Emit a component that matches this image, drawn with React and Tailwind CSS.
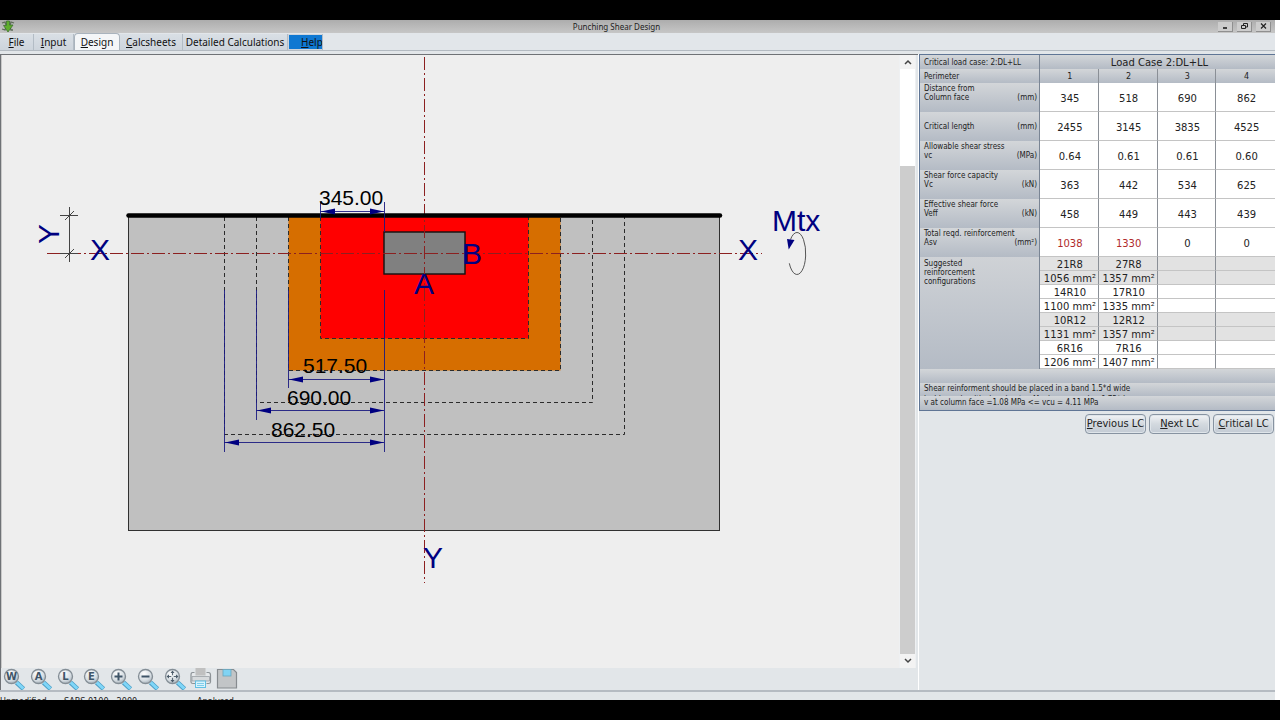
import React from "react";

const TABS = [
  { label: "File", width: "w-[34px]" },
  { label: "Input", width: "w-[40px]" },
  { label: "Design", width: "w-[46px]", active: true },
  { label: "Calcsheets", width: "w-[63px]" },
  { label: "Detailed Calculations", width: "w-[105px]", plain: true },
];

const RESULTS = [
  { name: "Distance from", symbol: "Column face", unit: "(mm)", values: ["345", "518", "690", "862"] },
  { name: "", symbol: "Critical length", unit: "(mm)", values: ["2455", "3145", "3835", "4525"] },
  { name: "Allowable shear stress", symbol: "vc", unit: "(MPa)", values: ["0.64", "0.61", "0.61", "0.60"] },
  { name: "Shear force capacity", symbol: "Vc", unit: "(kN)", values: ["363", "442", "534", "625"] },
  { name: "Effective shear force", symbol: "Veff", unit: "(kN)", values: ["458", "449", "443", "439"] },
  { name: "Total reqd. reinforcement", symbol: "Asv", unit: "(mm²)", values: ["1038", "1330", "0", "0"], warn: [true, true] },
];

const CONFIGS = [
  ["21R8", "27R8"],
  ["1056 mm²", "1357 mm²"],
  ["14R10", "17R10"],
  ["1100 mm²", "1335 mm²"],
  ["10R12", "12R12"],
  ["1131 mm²", "1357 mm²"],
  ["6R16", "7R16"],
  ["1206 mm²", "1407 mm²"],
];

function Hotkey({ text }) {
  return (
    <span>
      <span className="underline underline-offset-1">{text[0]}</span>
      {text.slice(1)}
    </span>
  );
}

function TitleBar() {
  const button =
    "flex h-[10px] w-[15px] items-center justify-center bg-[#cdcdcd] border-r border-b border-[#8f8f8f]";
  return (
    <header className="flex h-[13px] shrink-0 items-center bg-linear-to-b from-[#adadad] to-[#c6c6c6] pr-1">
      <svg viewBox="0 0 14 13" className="ml-px h-[13px] w-[14px]" aria-hidden="true">
        <path d="M1 3 L4 2 L5 5 M13 3 L10 2 L9 5 M1 9 L4 10 L5 7 M12 10 L10 10 L9 7" fill="none" stroke="#5e6b58" strokeWidth="1.3" />
        <path d="M5.5 1 H8.5 V5 H12 L7 12 L2.5 5.5 H5.5 Z" fill="#5fae2c" stroke="#3d7030" strokeWidth="0.8" />
      </svg>
      <h1 className="flex-1 text-center font-['Noto_Sans',Tahoma,sans-serif] text-[8px] leading-3 text-[#222]">
        Punching Shear Design
      </h1>
      <div className="flex gap-1">
        <button aria-label="Minimize" className={button}>
          <svg viewBox="0 0 9 8" className="h-2 w-[9px]"><path d="M2 6 H6" stroke="#111" strokeWidth="1.5" /></svg>
        </button>
        <button aria-label="Restore" className={button}>
          <svg viewBox="0 0 9 8" className="h-2 w-[9px]">
            <path d="M3.5 3 V1.5 H7.5 V5 H6 M1.5 3.5 H5.5 V6.5 H1.5 Z" fill="none" stroke="#222" />
          </svg>
        </button>
        <button aria-label="Close" className={button}>
          <svg viewBox="0 0 9 8" className="h-2 w-[9px]"><path d="M2 1.5 L7 6.5 M7 1.5 L2 6.5" stroke="#222" strokeWidth="1.2" /></svg>
        </button>
      </div>
    </header>
  );
}

function TabBar() {
  return (
    <nav className="flex h-[18px] shrink-0 items-end border-b border-[#b3bac1] bg-[#e2e6ea] font-['Noto_Sans',Tahoma,sans-serif] text-[10px] leading-4 text-[#111]">
      {TABS.map((tab) => (
        <button
          key={tab.label}
          className={`flex shrink-0 items-center justify-center whitespace-nowrap border-r ${tab.width} ${
            tab.active
              ? "h-[17px] rounded-t-sm border-x border-t border-[#a9b3bd] bg-[#f4f6f8]"
              : "h-4 border-[#b3bcc5] bg-linear-to-b from-[#d9dfe5] to-[#cdd4dc]"
          }`}
        >
          {tab.plain ? tab.label : <Hotkey text={tab.label} />}
        </button>
      ))}
      <button className="h-4 w-[35px] border-r border-[#b3bcc5] bg-[#cdd4dc] pl-px text-left">
        <span className="block h-[14px] w-[33px] overflow-hidden bg-[#0f78d2] pl-3 leading-[14px]">
          <Hotkey text="Help" />
        </span>
      </button>
    </nav>
  );
}

const arrow = (x, y, dir) => `M${x} ${y} l${dir * 14} -3 v6 Z`;

function Drawing() {
  return (
    <svg
      viewBox="2 55 897 613"
      className="h-full w-full"
      role="img"
      aria-label="Punching shear plan"
      fontFamily="'Liberation Sans', Arial, sans-serif"
    >
      <rect x="128.5" y="215.5" width="591" height="315" fill="#c0c0c0" stroke="#303030" />
      <rect x="288.5" y="215.5" width="272" height="155" fill="#d66e00" />
      <rect x="320.5" y="215.5" width="208" height="123" fill="#ff0000" />
      <g fill="none" stroke="#2b2b2b" strokeDasharray="4 3">
        <path d="M288.5 217 V370.5 H560.5 V217" />
        <path d="M320.5 217 V338.5 H528.5 V217" />
        <path d="M256.5 217 V402.5 H592.5 V217" />
        <path d="M224.5 217 V434.5 H624.5 V217" />
      </g>
      <rect x="384" y="232" width="81" height="42" fill="#808080" stroke="#111" strokeWidth="1.4" />
      <g stroke="#8c2020" strokeDasharray="13 3 2 3">
        <path d="M424.5 57 V583" />
        <path d="M47 253.5 H762" />
      </g>
      <path d="M128.5 215.5 H720" stroke="#000" strokeWidth="4.5" strokeLinecap="round" />

      <g stroke="#1a1a80" fill="none" strokeWidth="0.9">
        <path d="M320.5 202 V218 M384.5 202 V232 M320.5 211.5 H384" />
        <path d="M288.5 290 V388 M256.5 290 V420 M224.5 290 V452 M384.5 290 V452" />
        <path d="M288 379.5 H384 M256 410.5 H384 M224 442.5 H384" />
      </g>
      <g fill="#000080">
        <path d={arrow(321, 211.5, 1)} />
        <path d={arrow(384, 211.5, -1)} />
        <path d={arrow(289, 379.5, 1)} />
        <path d={arrow(384, 379.5, -1)} />
        <path d={arrow(257, 410.5, 1)} />
        <path d={arrow(384, 410.5, -1)} />
        <path d={arrow(225, 442.5, 1)} />
        <path d={arrow(384, 442.5, -1)} />
      </g>
      <g fontSize="21" fill="#000">
        <text x="319" y="205">345.00</text>
        <text x="303" y="373">517.50</text>
        <text x="287" y="405">690.00</text>
        <text x="271" y="437">862.50</text>
      </g>

      <path d="M69.5 207 V262 M60 215.5 H78 M60 253.5 H78 M65 220 L74 211 M65 258 L74 249" stroke="#444" fill="none" />

      <g fontSize="30" fill="#000080">
        <text x="90" y="260">X</text>
        <text x="738" y="260">X</text>
        <text x="414" y="294">A</text>
        <text x="462" y="264">B</text>
        <text x="423" y="568">Y</text>
        <text x="772" y="231">Mtx</text>
        <text transform="translate(59 234) rotate(-90)" textAnchor="middle">Y</text>
      </g>
      <path d="M789.3 263.3 A8.7 21 0 1 0 790.5 239.5" fill="none" stroke="#444" strokeWidth="0.9" />
      <path d="M787 239 L794.5 240 L788.7 249.5 Z" fill="#000080" />
    </svg>
  );
}

function Scrollbar() {
  const button = "flex h-[14px] w-full items-center justify-center bg-[#f3f3f3]";
  return (
    <div className="mr-0.5 flex w-[17px] shrink-0 flex-col border-l border-r border-[#eef0f2] bg-white">
      <button aria-label="Scroll up" className={button}>
        <svg viewBox="0 0 8 6" className="h-[6px] w-2"><path d="M1 5 L4 2 L7 5" fill="none" stroke="#444" strokeWidth="1.5" /></svg>
      </button>
      <div className="flex grow-[97]" />
      <div className="flex grow-[488] bg-[#cdcdcd]" />
      <button aria-label="Scroll down" className={button}>
        <svg viewBox="0 0 8 6" className="h-[6px] w-2"><path d="M1 1 L4 4 L7 1" fill="none" stroke="#444" strokeWidth="1.5" /></svg>
      </button>
    </div>
  );
}

function Magnifier({ children, label }) {
  return (
    <button aria-label={label} className="h-[23px] w-[23px]">
      <svg viewBox="0 0 23 23" className="h-full w-full">
        <defs>
          <radialGradient id="lens" cx="0.4" cy="0.3" r="0.8">
            <stop offset="0" stopColor="#ffffff" />
            <stop offset="0.6" stopColor="#d6dde2" />
            <stop offset="1" stopColor="#98a4ae" />
          </radialGradient>
        </defs>
        <path d="M13.5 14.5 L20.5 21" stroke="#4d9fc6" strokeWidth="4.6" />
        <path d="M13.8 14.5 L20.3 20.6" stroke="#7fd6f8" strokeWidth="3" />
        <circle cx="8.5" cy="8.5" r="7" fill="url(#lens)" stroke="#848e96" strokeWidth="1.3" />
        {children}
      </svg>
    </button>
  );
}

function Toolbar() {
  return (
    <div className="h-[22px] shrink-0 overflow-hidden bg-[#e2e6e9] pl-0.5">
      <div role="toolbar" className="flex w-[235px] justify-between">
        {["W", "A", "L", "E"].map((letter) => (
          <Magnifier key={letter} label={`Zoom ${letter}`}>
            <text x="8.5" y="12" textAnchor="middle" fontSize="10" fontWeight="700" fill="#3f5568" fontFamily="'DejaVu Sans', sans-serif">
              {letter}
            </text>
          </Magnifier>
        ))}
        <Magnifier label="Zoom in">
          <path d="M8.5 4.5 V12.5 M4.5 8.5 H12.5" stroke="#3f5568" strokeWidth="2" />
        </Magnifier>
        <Magnifier label="Zoom out">
          <path d="M4.5 8.5 H12.5" stroke="#3f5568" strokeWidth="2" />
        </Magnifier>
        <Magnifier label="Pan">
          <path d="M8.5 5 V7.3 M8.5 9.7 V12 M5 8.5 H7.3 M9.7 8.5 H12" stroke="#5b6a76" strokeWidth="1.2" />
          <path d="M8.5 2.5 L10.5 5 H6.5 Z M8.5 14.5 L10.5 12 H6.5 Z M2.5 8.5 L5 6.5 V10.5 Z M14.5 8.5 L12 6.5 V10.5 Z" fill="#4a5a68" />
        </Magnifier>
        <button aria-label="Print" className="h-[22px] w-[22px]">
          <svg viewBox="0 0 22 22" className="h-full w-full">
            <path d="M4.5 4.500 H2.5 Q1 4.500 1 7 V14 Q1 15.500 3 15.500 H5 M16.500 4.500 H18.500 Q20.500 4.500 20.500 7 V14 Q20.500 15.500 18.500 15.500 H16.500" fill="#e7e9eb" stroke="#8d9397" strokeWidth="1.2" />
            <path d="M2 8.5 H19.5 V13 H2 Z" fill="#d7dadc" stroke="#9aa0a4" strokeWidth="0.8" />
            <rect x="5.5" y="0" width="10" height="7.5" fill="#c0c0c0" />
            <rect x="5.5" y="13" width="10" height="6.5" fill="#d9f3fc" stroke="#62bfe2" />
            <path d="M7 15.5 H14 M7 17.5 H14" stroke="#7fcdea" />
          </svg>
        </button>
        <button aria-label="Save" className="h-[22px] w-[22px]">
          <svg viewBox="0 0 22 22" className="h-full w-full">
            <path d="M1.500 1.500 H17.500 L20.500 4.500 V20 H1.500 Z" fill="#c2c5c7" stroke="#868b8f" strokeWidth="1.2" />
            <rect x="7" y="1.5" width="8" height="6.5" fill="#80d3f3" stroke="#6aa7be" strokeWidth="0.8" />
          </svg>
        </button>
      </div>
    </div>
  );
}

const headFill = "bg-linear-to-b from-[#d3d6d9] to-[#b4bbc5]";

function ResultsTable() {
  const valueCell = "border-r border-[#8a8f96] last:border-r-0";
  return (
    <table className="w-full table-fixed border-separate border-spacing-0 border-l border-t border-[#5f7595] font-['DejaVu_Sans',Verdana,sans-serif] text-[10px] leading-[11px] text-[#222]">
      <colgroup>
        <col className="w-[120px]" />
        <col />
        <col />
        <col />
        <col />
      </colgroup>
      <thead>
        <tr>
          <th scope="col" className={`h-[14px] border-r border-[#7a8594] p-0 pl-1 text-left font-['DejaVu_Sans_Condensed',Tahoma,sans-serif] text-[8px] font-normal ${headFill}`}>
            Critical load case: 2:DL+LL
          </th>
          <th scope="colgroup" colSpan={4} className={`h-[14px] p-0 pl-1 font-normal ${headFill}`}>
            Load Case 2:DL+LL
          </th>
        </tr>
        <tr>
          <th scope="row" className={`h-[14px] border-r border-[#7a8594] p-0 pl-1 text-left font-['DejaVu_Sans_Condensed',Tahoma,sans-serif] text-[8px] font-normal ${headFill}`}>
            Perimeter
          </th>
          {["1", "2", "3", "4"].map((n) => (
            <th key={n} scope="col" className={`h-[14px] p-0 pl-0.5 text-[8px] font-normal ${valueCell} ${headFill}`}>
              {n}
            </th>
          ))}
        </tr>
      </thead>
      <tbody>
        {RESULTS.map((row) => (
          <tr key={row.symbol}>
            <th scope="row" className={`h-[29px] border-r border-[#7a8594] p-0 pl-1 text-left align-top font-['DejaVu_Sans_Condensed',Tahoma,sans-serif] text-[8px] font-normal ${headFill}`}>
              <div className="h-[10px] whitespace-nowrap pt-px leading-[9px]">{row.name}</div>
              <div className="flex justify-between pr-0.5 leading-[9px]">
                <span>{row.symbol}</span>
                <span>{row.unit}</span>
              </div>
            </th>
            {row.values.map((value, i) => (
              <td
                key={i}
                className={`h-[29px] border-b border-b-[#c4c4c4] bg-white p-0 pl-0.5 pt-0.5 text-center ${valueCell} ${
                  row.warn && row.warn[i] ? "text-[#b02a2a]" : ""
                }`}
              >
                {value}
              </td>
            ))}
          </tr>
        ))}
        {CONFIGS.map((row, r) => (
          <tr key={r} className={r % 4 < 2 ? "bg-[#e2e2e2]" : "bg-white"}>
            {r === 0 && (
              <th
                scope="rowgroup"
                rowSpan={8}
                className="border-r border-[#7a8594] bg-linear-to-b from-[#cfd2d6] to-[#b4bbc5] p-0 pl-1 pt-0.5 text-left align-top font-['DejaVu_Sans_Condensed',Tahoma,sans-serif] text-[8px] font-normal leading-[9px]"
              >
                Suggested
                <br />
                reinforcement
                <br />
                configurations
              </th>
            )}
            {[row[0], row[1], "", ""].map((value, i) => (
              <td key={i} className={`h-[14px] whitespace-nowrap border-b border-b-[#c4c4c4] p-0 pl-0.5 pt-0.5 text-center ${valueCell}`}>
                {value}
              </td>
            ))}
          </tr>
        ))}
      </tbody>
    </table>
  );
}

function ResultsPanel() {
  return (
    <aside className="flex w-[357px] shrink-0 flex-col border-l border-white bg-[#e2e6e9]">
      <ResultsTable />
      <div className="border-b border-l border-[#5f7595] text-[8px] text-[#222]">
        <div className={`h-[14px] ${headFill}`} />
        <div className={`h-[13px] overflow-hidden pl-1 leading-[11px] ${headFill}`}>
          Shear reinforment should be placed in a band 1.5*d wide
          <br />
          inside each critical perimeter. Maximum spacing 0.75*d
        </div>
        <div className={`h-[14px] pl-1 leading-[14px] ${headFill}`}>v at column face =1.08 MPa &lt;= vcu = 4.11 MPa</div>
      </div>
      <div className="flex justify-end gap-[3px] pr-px pt-[3px]">
        {["Previous LC", "Next LC", "Critical LC"].map((label) => (
          <button
            key={label}
            className="flex h-5 w-[61px] items-center justify-center whitespace-nowrap rounded border border-[#8793a1] bg-linear-to-b from-[#f1f3f5] via-[#d3d9df] to-[#c3cbd4] text-[11px] leading-4 text-[#222] shadow-[inset_0_0_0_1px_#dfe5ea]"
          >
            <Hotkey text={label} />
          </button>
        ))}
      </div>
    </aside>
  );
}

export default function App() {
  return (
    <div className="flex h-screen flex-col overflow-hidden bg-black py-5 font-['DejaVu_Sans_Condensed',Tahoma,sans-serif]">
      <div className="flex min-h-0 flex-1 bg-white pr-[5px]">
        <div className="flex min-w-0 flex-1 flex-col overflow-hidden bg-[#e2e6e9]">
          <TitleBar />
          <TabBar />
          <div className="flex min-h-0 flex-1 pt-[3px]">
            <main className="flex min-w-0 flex-1 flex-col border-l border-t border-[#6f7276]">
              <div className="flex min-h-0 flex-1">
                <div className="min-w-0 flex-1 border-l border-[#c9c9c9] bg-[#eeeeee]">
                  <Drawing />
                </div>
                <Scrollbar />
              </div>
              <Toolbar />
            </main>
            <ResultsPanel />
          </div>
          <footer className="flex h-[10px] shrink-0 overflow-hidden border-t-2 border-[#b5bbc2] pt-[3px] text-[9px] leading-3 text-[#222]">
            <span className="w-[64px] shrink-0">Unmodified</span>
            <span className="w-[133px] shrink-0">SABS 0100 - 2000</span>
            <span>Analysed</span>
          </footer>
        </div>
      </div>
    </div>
  );
}
